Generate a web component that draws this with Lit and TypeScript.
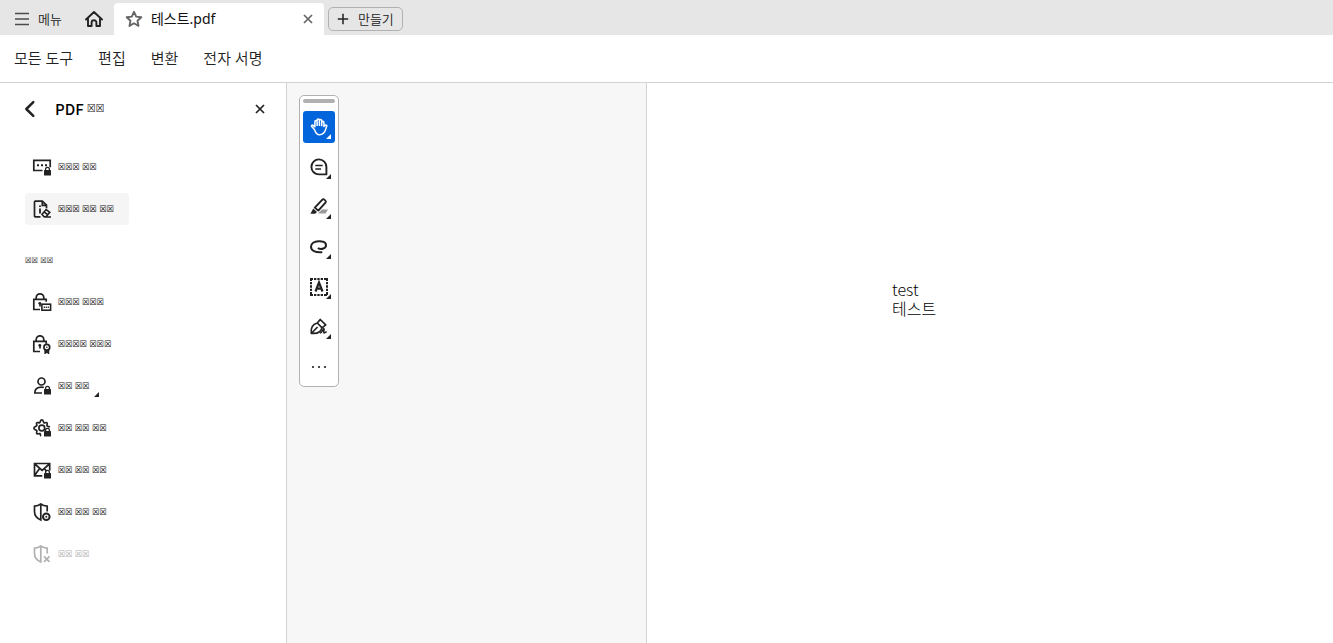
import { LitElement, html, css, svg, nothing, type SVGTemplateResult } from "lit";
import { customElement, property } from "lit/decorators.js";
import { classMap } from "lit/directives/class-map.js";

const lockBadge = svg`<rect class="solid" x="12" y="13" width="7" height="5.500" rx=".6" /><path d="M13.600 13.500v-1.300a1.900 1.900 0 0 1 3.800 0v1.300" stroke-width="1.300" />`;
const padlock = svg`<path d="M8 17.500H1.800V7.400h12.400v2.400M4.200 7.200V5.600a3.800 3.800 0 0 1 7.600 0v1.600" /><path d="M8 11v3.500" /><circle class="solid" cx="7.800" cy="11.300" r="1.400" />`;
const shield = svg`<path d="M8.800 2v16c-3.600-1.400-6.300-4-6.300-8.400V4.200C5 4 7.200 3.200 8.800 2c1.600 1.200 3.800 2 6.400 2.200v5.200" />`;

const icons: Record<string, SVGTemplateResult> = {
  menu: svg`<path d="M3 4.500h14M3 10h14M3 15.500h14" />`,
  home: svg`<path d="M2 10.500 10 3l8 7.500M4 9.500V17h3.600v-3.400a2.400 2.400 0 0 1 4.800 0V17H16V9.500" stroke-width="1.900" stroke-linejoin="round" stroke-linecap="round" />`,
  star: svg`<path d="M10 2.800l2.200 4.800 5.100.6-3.800 3.500 1 5.200-4.500-2.600-4.500 2.600 1-5.200L2.700 8.200l5.100-.6z" stroke-width="1.900" stroke-linejoin="round" />`,
  close: svg`<path d="M5 5l10 10M15 5 5 15" stroke-width="2.200" />`,
  plus: svg`<path d="M10 3.500v13M3.500 10h13" stroke-width="1.900" />`,
  back: svg`<path d="M13.300 3.200 6.300 10l7 6.800" stroke-width="2.500" stroke-linecap="round" stroke-linejoin="round" />`,
  password: svg`<path d="M10.500 13.500H1.800V3.300h16.400v7" /><path d="M5 8.300h2M9 8.300h2M13 8.300h2" stroke-width="2" />${lockBadge}`,
  redact: svg`<path d="M8.500 17.800H3.300a.8.8 0 0 1-.8-.8V3c0-.5.300-.8.800-.8h7l4.200 4v3M10.300 2.400v4h4" /><path d="M8 9.500v5M8 6.500v1.500" stroke-width="1.800" /><path d="M10 15.200l4.200-4.700 3.600 2.800-3.800 4.500h-2zM12 12.800l3.600 2.900M12.500 18h6.500" stroke-width="1.600" />`,
  lockPassword: svg`${padlock}<rect x="9.900" y="12.200" width="8.700" height="6" stroke-width="1.600" /><path d="M11.700 15.200h1.200M13.700 15.200h1.200M15.700 15.200h1.200" stroke-width="1.500" />`,
  lockCertificate: svg`${padlock}<circle cx="14.800" cy="13.200" r="2.900" /><circle class="solid" cx="14.800" cy="13.200" r=".8" /><path d="M13.200 15.500v3.500l1.600-1.200 1.600 1.200v-3.500" />`,
  person: svg`<circle cx="9.500" cy="5.500" r="3.500" /><path d="M10 17H2.800c0-3.800 2.600-5.900 6.700-5.900 1 0 1.700.1 2.300.4" />${lockBadge}`,
  gear: svg`<path d="M9 18c-.7-.5-.5-2-1.200-2.400-.8-.4-2.200.9-3 .1s.4-2.200 0-3C4.500 11.900 1.900 11.900 1.900 10.200s2.500-1.700 2.900-2.500c.4-.8-.9-2-.1-2.900s2.100.4 2.900 0 .6-2.900 2.200-2.900 1.500 2.600 2.300 3c.8.3 2.100-1 2.900-.1s-.4 2-.1 2.800 1.900.9 3 1.500" /><circle cx="9.800" cy="10" r="2.900" />${lockBadge}`,
  mail: svg`<path d="M10.300 15.800H2.500V3.500h15.200v7M2.800 4l7.300 6.400L17.400 4M2.800 15.300l4.800-6.700M12.400 8.600l2.200 2.600" />${lockBadge}`,
  shieldGear: svg`${shield}<circle cx="14.300" cy="14.700" r="3.300" stroke-width="2" /><circle class="solid" cx="14.300" cy="14.700" r="1" />`,
  shieldOff: svg`${shield}<path d="M12 12.300l5.500 5.500M17.500 12.300 12 17.800" />`,
  hand: svg`<path d="M5.600 12.700 2.700 9.500c-.7-.9.600-1.900 1.400-1.200l1.800 1.500V4.500c0-1.500 2.200-1.500 2.200 0V9M8.100 8.500V3.200c0-1.500 2.300-1.500 2.300 0V9M10.400 8.500V3.500c0-1.500 2.300-1.500 2.300 0v5.700M12.700 9V5.400c0-1.400 2.200-1.400 2.200 0V9.500l1.600-1.300c.8-.6 1.700.2 1.200 1.100-1.200 2-.8 8.500-7.300 8.500-3.300 0-3.900-2.500-4.800-5.100" stroke-width="1.500" stroke-linejoin="round" />`,
  comment: svg`<path d="M17.400 17.400H10A7.500 7.500 0 1 1 17.400 10z" stroke-width="1.900" stroke-linejoin="round" /><path d="M6.300 8.500h7.400M6.300 12h5.700" />`,
  highlight: svg`<path class="shade" d="M9 16.500 13 12.500h6l-2.500 4z" /><path d="M5.800 10.600 13.600 2.400c1-.9 4 1.800 3.100 2.900L9.300 13.600z" stroke-width="1.900" stroke-linejoin="round" /><path class="solid" d="M4.200 11.500 8 15l-1.800 1.800H1.500z" />`,
  lasso: svg`<path d="M9.500 11.500c3 1 7.500 0 7.500-3.300C17 4.900 13.200 4 9.500 4.200 5.200 4.400 2 6.500 2 9.800c0 4 4.500 5.800 10.500 5.400" stroke-width="2" stroke-linecap="round" />`,
  textSelect: svg`<path d="M1 2h18M1 18h18" stroke-width="2" stroke-dasharray="3 1 2.330 1 2.330 1 2.340 1 3" /><path d="M2 1v18M18 1v18" stroke-width="2" stroke-dasharray="3 1 2.330 1 2.330 1 2.340 1 3" /><path d="M6.500 14.500 10 5.500l3.500 9M8 11.700h4" stroke-width="2.200" />`,
  sign: svg`<path d="M2.300 16.300c-.8-5.500 1.500-9 6-10.300l4.800 4.800c-1.300 4.500-4.800 6.300-10.800 5.500zM8.300 6l2.900-3.500 5.500 5.300-3.600 3M2.600 16l6-6" stroke-width="1.700" stroke-linejoin="round" /><path d="M11 16c2.500.200 3-4.800 4-4.400s-1.300 4.200.2 4.400l2.500-1.300" stroke-width="1.500" />`,
  more: svg`<circle class="solid" cx="4" cy="10" r="1.100" /><circle class="solid" cx="10" cy="10" r="1.100" /><circle class="solid" cx="16" cy="10" r="1.100" />`,
};

@customElement("ui-icon")
export class UiIcon extends LitElement {
  static styles = css`
    :host { display: block; flex: none; width: 20px; height: 20px; }
    svg { display: block; width: 100%; height: 100%; fill: none; stroke: currentColor; stroke-width: 1.7; }
    .solid { fill: currentColor; stroke: none; }
    .shade { fill: #999; stroke: none; }
  `;
  @property() name = "";
  render() {
    return html`<svg viewBox="0 0 20 20" aria-hidden="true">${icons[this.name]}</svg>`;
  }
}

interface Entry { icon: string; label: string; active?: boolean; more?: boolean; disabled?: boolean; }

const primary: Entry[] = [
  { icon: "password", label: "☒☒☒ ☒☒" },
  { icon: "redact", label: "☒☒☒ ☒☒ ☒☒", active: true },
];
const secondary: Entry[] = [
  { icon: "lockPassword", label: "☒☒☒ ☒☒☒" },
  { icon: "lockCertificate", label: "☒☒☒☒ ☒☒☒" },
  { icon: "person", label: "☒☒ ☒☒", more: true },
  { icon: "gear", label: "☒☒ ☒☒ ☒☒" },
  { icon: "mail", label: "☒☒ ☒☒ ☒☒" },
  { icon: "shieldGear", label: "☒☒ ☒☒ ☒☒" },
  { icon: "shieldOff", label: "☒☒ ☒☒", disabled: true },
];
const tools = ["hand", "comment", "highlight", "lasso", "textSelect", "sign", "more"];

@customElement("app-root")
export class AppRoot extends LitElement {
  static styles = css`
    :host {
      display: flex; flex-direction: column; min-height: 100vh; background: #fff; color: #222;
      font-family: "Noto Sans", "Noto Sans CJK KR", sans-serif; font-size: 13px; line-height: 20px; font-weight: 350;
    }
    * { box-sizing: border-box; }
    button {
      font: inherit; color: inherit; background: none; border: 0; margin: 0; padding: 0;
      display: flex; align-items: center; white-space: nowrap;
    }
    h1, h2, ul, p { margin: 0; padding: 0; list-style: none; }
    .small { width: 16px; height: 16px; }

    .tabs { display: flex; height: 35px; background: #e6e6e6; }
    .menu { gap: 6px; padding: 2px 12px 0; }
    .menu ui-icon { color: #4b4b4b; }
    .home { padding: 2px 10px 0; }
    .tab {
      display: flex; align-items: center; width: 210px; margin-top: 3px; padding: 0 8px 0 10px;
      background: #fff; border-radius: 4px 4px 0 0; font-size: 14px; font-weight: 400; color: #111;
    }
    .tab ui-icon { color: #666; }
    .tab span { flex: 1; padding-left: 7px; }
    .create {
      align-self: center; height: 24px; margin: 3px 0 0 4px; padding: 0 8px 0 6px; gap: 7px;
      border: 1px solid #b1b1b1; border-radius: 5px;
    }

    .bar { display: flex; gap: 25px; height: 48px; padding: 0 14px 2px; border-bottom: 1px solid #d3d3d3; font-size: 15px; }

    .main { flex: 1; display: grid; grid-template-columns: 287px 359px 1fr; }
    .panel { border-right: 1px solid #d3d3d3; padding: 16px 18px 16px 20px; }
    .head { display: flex; align-items: center; margin-bottom: 32px; }
    .head h1 {
      flex: 1; display: flex; align-items: center; gap: 3px; padding-left: 15px; color: #000;
      font-family: "Noto Sans CJK KR", sans-serif; font-size: 15px; font-weight: 500;
    }
    .missing { font-family: "DejaVu Sans Condensed", "DejaVu Sans", sans-serif; font-size: 9px; font-weight: 400; color: #111; }
    .head .missing { font-size: 11px; }
    .list { display: flex; flex-direction: column; align-items: flex-start; gap: 10px; padding-left: 5px; }
    .entry { height: 32px; padding: 0 15px 0 7px; gap: 6px; border-radius: 4px; }
    .entry.active { background: #f5f5f5; }
    .entry.disabled, .entry.disabled .missing { color: #b1b1b1; }
    .corner { flex: none; width: 0; height: 0; border-left: 5px solid transparent; border-bottom: 5px solid currentColor; }
    .entry .corner { margin: 16px 0 0 -2px; }
    h2.missing { font-size: 8px; padding: 26px 0 15px 5px; }

    .canvas { background: #f7f7f7; padding: 12px; }
    .tools {
      display: flex; flex-direction: column; gap: 8px; width: 40px; padding: 3px;
      border: 1px solid #b1b1b1; border-radius: 5px; background: #fff;
    }
    .grip { height: 4px; background: #b1b1b1; border-radius: 2px; }
    .tool { position: relative; width: 32px; height: 32px; justify-content: center; border-radius: 3px; }
    .tool.on { background: #0265dc; color: #fff; }
    .tool .corner { position: absolute; right: 4px; bottom: 4px; }

    .page { border-left: 1px solid #d3d3d3; background: #fff; padding: 197px 20px 20px 245px; }
    .page p { font-size: 16px; line-height: 19px; color: #000; font-family: "Noto Sans CJK KR", sans-serif; font-weight: 300; }
  `;

  private entry(e: Entry) {
    return html`<li>
      <button class=${classMap({ entry: true, active: !!e.active, disabled: !!e.disabled })} ?disabled=${!!e.disabled}>
        <ui-icon name=${e.icon}></ui-icon><span class="missing">${e.label}</span>${e.more ? html`<i class="corner"></i>` : nothing}
      </button>
    </li>`;
  }

  render() {
    return html`
      <header class="tabs">
        <button class="menu"><ui-icon name="menu"></ui-icon>메뉴</button>
        <button class="home" aria-label="홈"><ui-icon name="home"></ui-icon></button>
        <div class="tab">
          <ui-icon name="star"></ui-icon><span>테스트.pdf</span>
          <button aria-label="닫기"><ui-icon class="small" name="close"></ui-icon></button>
        </div>
        <button class="create"><ui-icon class="small" name="plus"></ui-icon>만들기</button>
      </header>
      <nav class="bar">
        <button>모든 도구</button><button>편집</button><button>변환</button><button>전자 서명</button>
      </nav>
      <main class="main">
        <aside class="panel">
          <div class="head">
            <button aria-label="뒤로"><ui-icon name="back"></ui-icon></button>
            <h1>PDF <span class="missing">☒☒</span></h1>
            <button aria-label="닫기"><ui-icon class="small" name="close"></ui-icon></button>
          </div>
          <ul class="list">${primary.map((e) => this.entry(e))}</ul>
          <h2 class="missing">☒☒ ☒☒</h2>
          <ul class="list">${secondary.map((e) => this.entry(e))}</ul>
        </aside>
        <section class="canvas">
          <div class="tools" role="toolbar">
            <div class="grip"></div>
            ${tools.map((t, i) => html`<button class=${classMap({ tool: true, on: i === 0 })} aria-label=${t}>
              <ui-icon name=${t}></ui-icon>${t === "more" ? nothing : html`<i class="corner"></i>`}
            </button>`)}
          </div>
        </section>
        <article class="page"><p>test<br>테스트</p></article>
      </main>
    `;
  }
}
